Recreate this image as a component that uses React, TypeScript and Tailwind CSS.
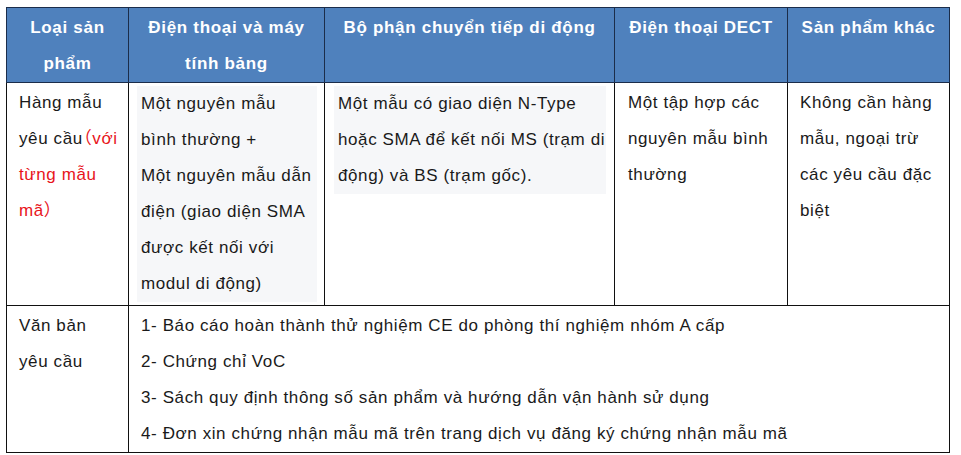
import React from "react";

const headers = [
  "Loại sản phẩm",
  "Điện thoại và máy tính bảng",
  "Bộ phận chuyển tiếp di động",
  "Điện thoại DECT",
  "Sản phẩm khác",
];

const docs = [
  "1- Báo cáo hoàn thành thử nghiệm CE do phòng thí nghiệm nhóm A cấp",
  "2- Chứng chỉ VoC",
  "3- Sách quy định thông số sản phẩm và hướng dẫn vận hành sử dụng",
  "4- Đơn xin chứng nhận mẫu mã trên trang dịch vụ đăng ký chứng nhận mẫu mã",
];

const App = () => {
  return (
    <div
      className="w-[961px] h-[455px] bg-white pl-[6px] pt-[7px] text-[17px] tracking-[0.6px] text-[#1a1a1a]"
      style={{ fontFamily: '"Liberation Sans", Arial, "Noto Sans CJK SC", sans-serif' }}
    >
      <table className="table-fixed border-collapse w-[943px]">
        <colgroup>
          <col className="w-[122px]" />
          <col className="w-[196px]" />
          <col className="w-[290px]" />
          <col className="w-[173px]" />
          <col className="w-[162px]" />
        </colgroup>
        <thead>
          <tr className="bg-[#4f81bd] h-[74px]">
            {headers.map((h, i) => (
              <th
                key={i}
                className={`border border-[#1b2d4a] align-top text-center text-white font-bold tracking-[0.7px] leading-[36px] pt-[2px] ${
                  i === 0 ? "px-[14px]" : "px-[8px]"
                }`}
              >
                {h}
              </th>
            ))}
          </tr>
        </thead>
        <tbody>
          <tr className="h-[221px]">
            <td className="border border-[#111] align-top leading-[36px] pt-[2px] pl-[12px] pr-[2px]">
              Hàng mẫu yêu cầu
              <span className="text-[#e8141b]">
                <span className="ml-[-8px]">（</span>với từng mẫu mã）
              </span>
            </td>
            <td className="border border-[#111] align-top leading-[36px] pt-[3px] pb-[3px] pl-[8px] pr-[7px]">
              <div className="bg-[#f6f7f9] pl-[4px] pr-[4px]">
                Một nguyên mẫu bình thường +
                <br />
                Một nguyên mẫu dẫn điện (giao diện SMA được kết nối với modul di động)
              </div>
            </td>
            <td className="border border-[#111] align-top leading-[36px] pt-[3px] pl-[9px] pr-[8px]">
              <div className="bg-[#f6f7f9] pl-[4px]">
                Một mẫu có giao diện N-Type hoặc SMA để kết nối MS (trạm di động) và BS (trạm gốc).
              </div>
            </td>
            <td className="border border-[#111] align-top leading-[36px] pt-[2px] pl-[13px] pr-[8px]">
              Một tập hợp các nguyên mẫu bình thường
            </td>
            <td className="border border-[#111] align-top leading-[36px] pt-[2px] pl-[12px] pr-[4px]">
              Không cần hàng mẫu, ngoại trừ các yêu cầu đặc biệt
            </td>
          </tr>
          <tr className="h-[147px]">
            <td className="border border-[#111] align-top leading-[36px] pt-[2px] pl-[12px] pr-[30px]">
              Văn bản yêu cầu
            </td>
            <td colSpan={4} className="border border-[#111] align-top leading-[36px] pt-[2px] pl-[12px]">
              {docs.map((d, i) => (
                <div key={i}>{d}</div>
              ))}
            </td>
          </tr>
        </tbody>
      </table>
    </div>
  );
};

export default App;
